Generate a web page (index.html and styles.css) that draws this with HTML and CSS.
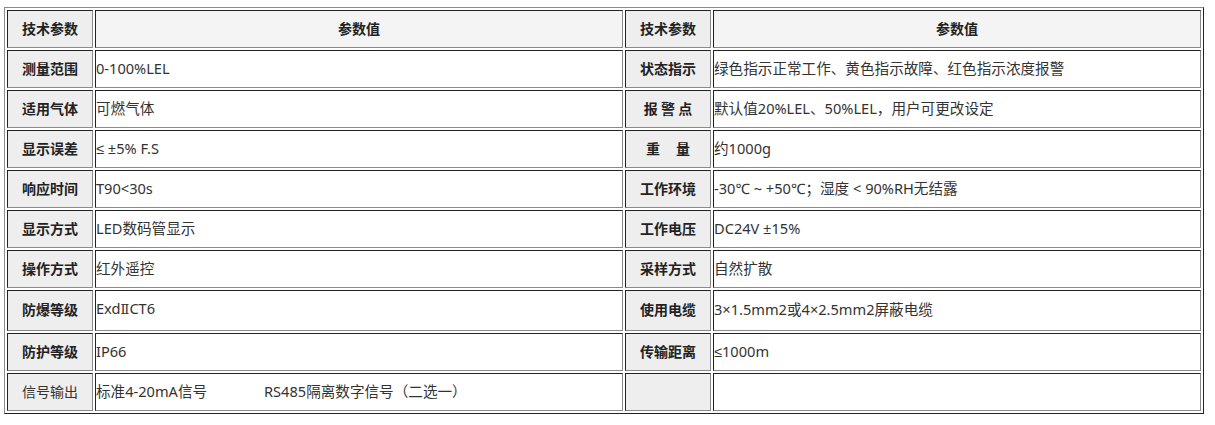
FILE: index.html
```html
<!DOCTYPE html>
<html lang="zh-CN">
<head>
<meta charset="utf-8">
<title>技术参数</title>
<link rel="stylesheet" href="styles.css">
</head>
<body>
<table class="spec">
  <tr class="head">
    <th class="c1">技术参数</th>
    <th class="c2 val">参数值</th>
    <th class="c3">技术参数</th>
    <th class="c4 val">参数值</th>
  </tr>
  <tr>
    <th>测量范围</th><td>0-100%LEL</td>
    <th>状态指示</th><td>绿色指示正常工作、黄色指示故障、红色指示浓度报警</td>
  </tr>
  <tr>
    <th>适用气体</th><td>可燃气体</td>
    <th>报 警 点</th><td>默认值20%LEL、50%LEL，用户可更改设定</td>
  </tr>
  <tr>
    <th>显示误差</th><td>≤ ±5% F.S</td>
    <th>重&nbsp;&nbsp;&nbsp;&nbsp;&nbsp;量</th><td>约1000g</td>
  </tr>
  <tr>
    <th>响应时间</th><td>T90&lt;30s</td>
    <th>工作环境</th><td>-30℃ ~ +50℃；湿度 &lt; 90%RH无结露</td>
  </tr>
  <tr>
    <th>显示方式</th><td>LED数码管显示</td>
    <th>工作电压</th><td>DC24V ±15%</td>
  </tr>
  <tr>
    <th>操作方式</th><td>红外遥控</td>
    <th>采样方式</th><td>自然扩散</td>
  </tr>
  <tr class="tall">
    <th>防爆等级</th><td>Exd<span class="numeral">Ⅱ</span>CT6</td>
    <th>使用电缆</th><td>3×1.5mm2或4×2.5mm2屏蔽电缆</td>
  </tr>
  <tr>
    <th>防护等级</th><td>IP66</td>
    <th>传输距离</th><td>≤1000m</td>
  </tr>
  <tr>
    <th class="plain">信号输出</th><td>标准4-20mA信号&nbsp;&nbsp;&nbsp;&nbsp;&nbsp;&nbsp;&nbsp;&nbsp;&nbsp;&nbsp;&nbsp;&nbsp;&nbsp;&nbsp;&nbsp;RS485隔离数字信号（二选一）</td>
    <th></th><td></td>
  </tr>
</table>
</body>
</html>
```
FILE: styles.css
```css
html, body {
  margin: 0;
  padding: 0;
  background: #fff;
}
body {
  padding: 7px 0 0 4px;
  font-family: "Noto Sans CJK SC", "Noto Sans", sans-serif;
  font-size: 14px;
  color: #333;
}
.spec {
  box-sizing: border-box;
  width: 1200px;
  table-layout: fixed;
  border-collapse: separate;
  border-spacing: 2px;
  border-style: solid;
  border-width: 1px;
  border-color: #8a8a8a #222 #222 #8a8a8a;
}
.spec tr {
  height: 38px;
}
.spec tr.tall {
  height: 41px;
}
.spec th,
.spec td {
  box-sizing: border-box;
  padding: 0 0 3px 0;
  border-style: solid;
  border-width: 1px;
  border-color: #222 #8a8a8a #8a8a8a #222;
  vertical-align: middle;
  white-space: nowrap;
  overflow: hidden;
  line-height: 20px;
}
.spec th {
  background: #eeeeee;
  font-weight: bold;
  text-align: center;
  color: #222;
}
.spec th.plain {
  font-weight: normal;
  color: #333;
}
.spec td {
  background: #fff;
  text-align: left;
  font-family: "Noto Sans", "Liberation Sans", "Noto Sans CJK SC", sans-serif;
  font-size: 14.6px;
}
.spec td .numeral {
  font-family: "DejaVu Serif", serif;
  font-size: 13px;
}
.spec .head th.val {
  background: #f4f4f4;
}
.c1, .c3 { width: 86px; }
.c2 { width: 528px; }
.c4 { width: 488px; }
```
